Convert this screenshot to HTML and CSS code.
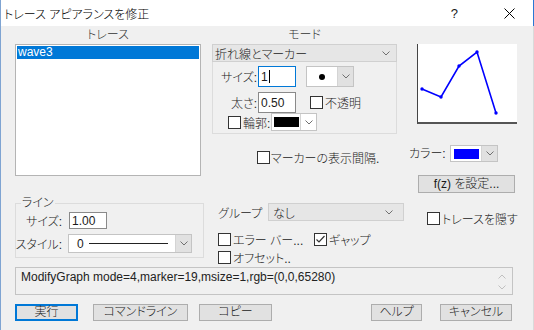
FILE: index.html
```html
<!DOCTYPE html>
<html lang="ja">
<head>
    <meta charset="UTF-8">
    <title>トレース アピアランスを修正</title>
    <link rel="stylesheet" href="styles.css">
</head>
<body>
    <div class="dialog">
        <div class="titlebar">
            <span class="title">トレース アピアランスを修正</span>
            <span class="help">?</span>
            <svg class="close" width="11" height="11" viewBox="0 0 11 11"><path d="M0.5 0.5 L10.5 10.5 M10.5 0.5 L0.5 10.5" stroke="#000" stroke-width="1"/></svg>
        </div>
        <div class="content">
            <div class="upper">
                <div class="trace-col">
                    <div class="caption">トレース</div>
                    <div class="listbox">
                        <div class="list-item selected">wave3</div>
                    </div>
                </div>
                <div class="right-area">
                    <div class="mode-row">
                        <div class="mode-col">
                            <div class="caption">モード</div>
                            <div class="combo mode-combo">
                                <span>折れ線とマーカー</span>
                                <svg class="chev" width="8" height="5" viewBox="0 0 8 5"><polyline points="0.5,0.5 4,4 7.5,0.5" fill="none" stroke="#707070"/></svg>
                            </div>
                            <div class="mode-box">
                                <div class="field-row row-size">
                                    <span class="lbl">サイズ:</span>
                                    <div class="edit focused">1<span class="caret"></span></div>
                                    <div class="popup marker-pop">
                                        <span class="pop-face"><span class="dot"></span></span>
                                        <span class="pop-arrow gray"><svg width="8" height="5" viewBox="0 0 8 5"><polyline points="0.5,0.5 4,4 7.5,0.5" fill="none" stroke="#707070"/></svg></span>
                                    </div>
                                </div>
                                <div class="field-row row-width">
                                    <span class="lbl">太さ:</span>
                                    <div class="edit">0.50</div>
                                    <label class="check opaque"><span class="box"></span>不透明</label>
                                </div>
                                <div class="field-row row-outline">
                                    <label class="check"><span class="box"></span>輪郭:</label>
                                    <div class="popup outline-pop">
                                        <span class="pop-face"><span class="swatch black"></span></span>
                                        <span class="pop-arrow"><svg width="8" height="5" viewBox="0 0 8 5"><polyline points="0.5,0.5 4,4 7.5,0.5" fill="none" stroke="#707070"/></svg></span>
                                    </div>
                                </div>
                            </div>
                        </div>
                        <div class="preview">
                            <svg width="100" height="80" viewBox="0 0 100 80">
                                <polyline points="5,45 24,53 42,22 60,8 79,69" fill="none" stroke="#0000ff" stroke-width="1.6"/>
                                <g fill="#0000ff">
                                    <circle cx="5" cy="45" r="1.7"/>
                                    <circle cx="24" cy="53" r="1.7"/>
                                    <circle cx="42" cy="22" r="1.7"/>
                                    <circle cx="60" cy="8" r="1.7"/>
                                    <circle cx="79" cy="69" r="1.7"/>
                                </g>
                            </svg>
                        </div>
                    </div>
                    <div class="extras">
                        <div class="extras-row">
                            <label class="check interval"><span class="box"></span>マーカーの表示間隔.</label>
                            <div class="color-field">
                                <span class="color-lbl">カラー:</span>
                                <div class="popup color-pop">
                                    <span class="pop-face"><span class="swatch blue"></span></span>
                                    <span class="pop-arrow gray"><svg width="8" height="5" viewBox="0 0 8 5"><polyline points="0.5,0.5 4,4 7.5,0.5" fill="none" stroke="#707070"/></svg></span>
                                </div>
                            </div>
                        </div>
                        <button class="btn fz-btn">f(z) を設定...</button>
                    </div>
                </div>
            </div>

            <div class="lower">
                <fieldset class="line-group">
                    <legend>ライン</legend>
                    <div class="line-grid">
                        <span class="lbl">サイズ:</span>
                        <div class="edit line-size">1.00</div>
                        <span class="lbl">スタイル:</span>
                        <div class="popup style-pop">
                            <span class="pop-face"><span class="style-num">0</span><span class="style-line"></span></span>
                            <span class="pop-arrow gray"><svg width="8" height="5" viewBox="0 0 8 5"><polyline points="0.5,0.5 4,4 7.5,0.5" fill="none" stroke="#707070"/></svg></span>
                        </div>
                    </div>
                </fieldset>
                <div class="group-area">
                    <div class="group-row">
                        <span class="group-lbl">グループ</span>
                        <div class="combo group-combo">
                            <span>なし</span>
                            <svg class="chev" width="8" height="5" viewBox="0 0 8 5"><polyline points="0.5,0.5 4,4 7.5,0.5" fill="none" stroke="#707070"/></svg>
                        </div>
                        <label class="check hide-trace"><span class="box"></span>トレースを隠す</label>
                    </div>
                    <div class="check-row">
                        <label class="check errbar"><span class="box"></span>エラー バー...</label>
                        <label class="check"><span class="box checked"><svg width="11" height="11" viewBox="0 0 11 11"><polyline points="1.5,5.5 4,8 9.5,2" fill="none" stroke="#333" stroke-width="1.2"/></svg></span>ギャップ</label>
                    </div>
                    <div class="check-row">
                        <label class="check"><span class="box"></span>オフセット..</label>
                    </div>
                </div>
            </div>

            <div class="command">
                <span class="cmd-text">ModifyGraph mode=4,marker=19,msize=1,rgb=(0,0,65280)</span>
                <div class="scroll">
                    <svg width="8" height="5" viewBox="0 0 8 5"><polyline points="0.5,4.5 4,1 7.5,4.5" fill="none" stroke="#c0c0c0"/></svg>
                    <svg width="8" height="5" viewBox="0 0 8 5"><polyline points="0.5,0.5 4,4 7.5,0.5" fill="none" stroke="#c0c0c0"/></svg>
                </div>
            </div>

            <div class="buttons">
                <button class="btn default do-it">実行</button>
                <button class="btn cmdline">コマンドライン</button>
                <button class="btn copy">コピー</button>
                <button class="btn help-btn">ヘルプ</button>
                <button class="btn cancel">キャンセル</button>
            </div>
        </div>
    </div>
</body>
</html>
```

FILE: styles.css
```css
html, body {
    margin: 0;
    padding: 0;
    overflow: hidden;
}
body {
    font-family: "Liberation Sans", "Noto Sans CJK JP", sans-serif;
    font-size: 12px;
    font-weight: 300;
    font-feature-settings: "palt";
    color: #1a1a1a;
    background: #f0f0f0;
}
.dialog {
    width: 534px;
    height: 330px;
    box-sizing: border-box;
    border-left: 1px solid #7fa4d2;
    background: #f0f0f0;
    display: flex;
    flex-direction: column;
}
.titlebar {
    height: 26px;
    background: #fff;
    display: flex;
    align-items: center;
    border-right: 1px solid #2a78d4;
}
.title {
    padding-left: 3px;
    font-size: 12px;
    color: #000;
}
.help {
    margin-left: auto;
    margin-right: 46px;
    font-size: 13px;
}
.close {
    margin-right: 18px;
}
.content {
    flex: 1;
    border-right: 1px solid #dadada;
}

/* upper part */
.upper {
    display: flex;
    height: 166px;
}
.caption {
    height: 18px;
    line-height: 18px;
    text-align: center;
    color: #333;
}
.trace-col {
    margin-left: 14px;
    width: 186px;
}
.listbox {
    height: 132px;
    box-sizing: border-box;
    border: 1px solid #b4b4b4;
    background: #fff;
    padding: 1px;
}
.list-item {
    height: 13px;
    line-height: 13px;
    padding-left: 1px;
    font-weight: 400;
}
.list-item.selected {
    background: #0078d7;
    color: #fff;
}
.right-area {
    margin-left: 11px;
    flex: 1;
}
.mode-row {
    display: flex;
}
.mode-col {
    width: 185px;
}
.combo {
    box-sizing: border-box;
    border: 1px solid #d0d0d0;
    background: #e6e6e6;
    display: flex;
    align-items: center;
    padding-left: 2px;
    padding-right: 6px;
    white-space: nowrap;
}
.combo .chev {
    margin-left: auto;
}
.mode-combo {
    height: 18px;
}
.mode-box {
    box-sizing: border-box;
    height: 72px;
    border: 1px solid #dcdcdc;
    border-top: none;
    padding-top: 4px;
}
.field-row {
    display: flex;
    align-items: center;
}
.lbl {
    text-align: right;
    white-space: nowrap;
}
.mode-box .lbl {
    width: 44px;
    margin-right: 1px;
}
.edit {
    box-sizing: border-box;
    width: 38px;
    height: 21px;
    border: 1px solid #8a8a8a;
    background: #fff;
    padding-left: 2px;
    display: flex;
    align-items: center;
    font-weight: 400;
}
.edit.focused {
    border-color: #0078d7;
}
.caret {
    display: inline-block;
    width: 1px;
    height: 13px;
    background: #000;
    margin-left: 1px;
}
.row-size {
    height: 21px;
}
.row-width {
    height: 21px;
    margin-top: 5px;
}
.row-outline {
    height: 18px;
}
.popup {
    display: flex;
    box-sizing: border-box;
    border: 1px solid #c4c4c4;
    background: #fff;
}
.pop-face {
    flex: 1;
    display: flex;
    align-items: center;
    justify-content: center;
}
.pop-arrow {
    width: 15px;
    display: flex;
    align-items: center;
    justify-content: center;
    border-left: 1px solid #d4d4d4;
}
.pop-arrow.gray {
    background: #e1e1e1;
}
.marker-pop {
    margin-left: 10px;
    width: 48px;
    height: 21px;
}
.dot {
    width: 6px;
    height: 6px;
    border-radius: 50%;
    background: #000;
}
.check {
    display: flex;
    align-items: center;
    gap: 2px;
    white-space: nowrap;
}
.box {
    box-sizing: border-box;
    width: 13px;
    height: 13px;
    border: 1px solid #333;
    background: #fff;
    display: inline-flex;
    align-items: center;
    justify-content: center;
}
.opaque {
    margin-left: 14px;
}
.row-outline .check {
    margin-left: 15px;
}
.outline-pop {
    margin-left: 1px;
    width: 46px;
    height: 18px;
}
.outline-pop .pop-face {
    justify-content: flex-start;
    padding-left: 2px;
}
.swatch {
    display: block;
}
.swatch.black {
    width: 25px;
    height: 10px;
    background: #000;
}
.preview {
    margin-left: 20px;
    margin-top: 18px;
    width: 100px;
    height: 80px;
    box-sizing: border-box;
    background: #fff;
    border-left: 1px solid #444;
    border-bottom: 2px solid #555;
}
.preview svg {
    display: block;
    margin-left: -1px;
}
.extras {
    margin-top: 11px;
}
.extras-row {
    display: flex;
    height: 17px;
}
.interval {
    margin-left: 45px;
    margin-top: 6px;
    width: 152px;
    height: 13px;
    gap: 1px;
}
.color-field {
    display: flex;
    align-items: flex-start;
}
.color-lbl {
    margin-top: -1px;
    width: 41px;
    white-space: nowrap;
}
.color-pop {
    width: 48px;
    height: 17px;
}
.color-pop .pop-face {
    justify-content: flex-start;
    padding-left: 3px;
}
.swatch.blue {
    width: 25px;
    height: 10px;
    background: #0000ff;
}
.btn {
    font-family: inherit;
    font-size: 12px;
    font-weight: 300;
    font-feature-settings: "palt";
    box-sizing: border-box;
    background: #e1e1e1;
    border: 1px solid #adadad;
    color: #1a1a1a;
    padding: 0;
    height: 17px;
    line-height: 15px;
}
.fz-btn {
    display: block;
    margin-top: 13px;
    margin-left: 206px;
    width: 97px;
    height: 18px;
}

/* lower part */
.lower {
    display: flex;
    align-items: flex-start;
    height: 66px;
    margin-top: 4px;
}
.line-group {
    margin: 0 0 0 14px;
    width: 189px;
    box-sizing: border-box;
    border: 1px solid #dcdcdc;
    padding: 2px 0 4px 0;
}
.line-group legend {
    padding: 0 1px;
    margin-left: 5px;
    line-height: 14px;
}
.line-grid {
    display: grid;
    grid-template-columns: 46px 124px;
    column-gap: 6px;
    row-gap: 5px;
    align-items: center;
}
.line-grid .lbl {
    justify-self: end;
}
.line-size {
    margin-left: 1px;
    height: 17px;
}
.style-pop {
    height: 19px;
    width: 124px;
}
.style-pop .pop-face {
    justify-content: flex-start;
    padding-left: 8px;
}
.style-line {
    width: 79px;
    height: 1px;
    background: #222;
    margin-left: 5px;
}
.group-area {
    margin-left: 14px;
    margin-top: 7px;
}
.group-row {
    display: flex;
    align-items: flex-start;
    height: 27px;
}
.group-lbl {
    margin-top: 1px;
    width: 50px;
    white-space: nowrap;
}
.group-combo {
    width: 136px;
    height: 18px;
    padding-left: 4px;
    padding-right: 10px;
}
.hide-trace {
    margin-left: 23px;
    margin-top: 9px;
    height: 13px;
}
.check-row {
    display: flex;
    height: 18px;
}
.errbar {
    width: 96px;
}

/* command line */
.command {
    margin: 5px 0 0 14px;
    width: 498px;
    height: 28px;
    box-sizing: border-box;
    border: 1px solid #c4c4c4;
    display: flex;
    padding: 2px 0 0 5px;
}
.cmd-text {
    line-height: 14px;
    font-weight: 400;
    color: #222;
}
.scroll {
    margin-left: auto;
    width: 14px;
    display: flex;
    flex-direction: column;
    justify-content: space-between;
    padding: 4px 0 4px;
}

/* buttons */
.buttons {
    display: flex;
    margin: 9px 0 0 14px;
}
.do-it {
    width: 63px;
}
.default {
    border: 2px solid #0078d7;
    line-height: 13px;
}
.cmdline {
    margin-left: 15px;
    width: 95px;
}
.copy {
    margin-left: 11px;
    width: 73px;
}
.help-btn {
    margin-left: 99px;
    width: 51px;
}
.cancel {
    margin-left: 18px;
    width: 72px;
}
```
